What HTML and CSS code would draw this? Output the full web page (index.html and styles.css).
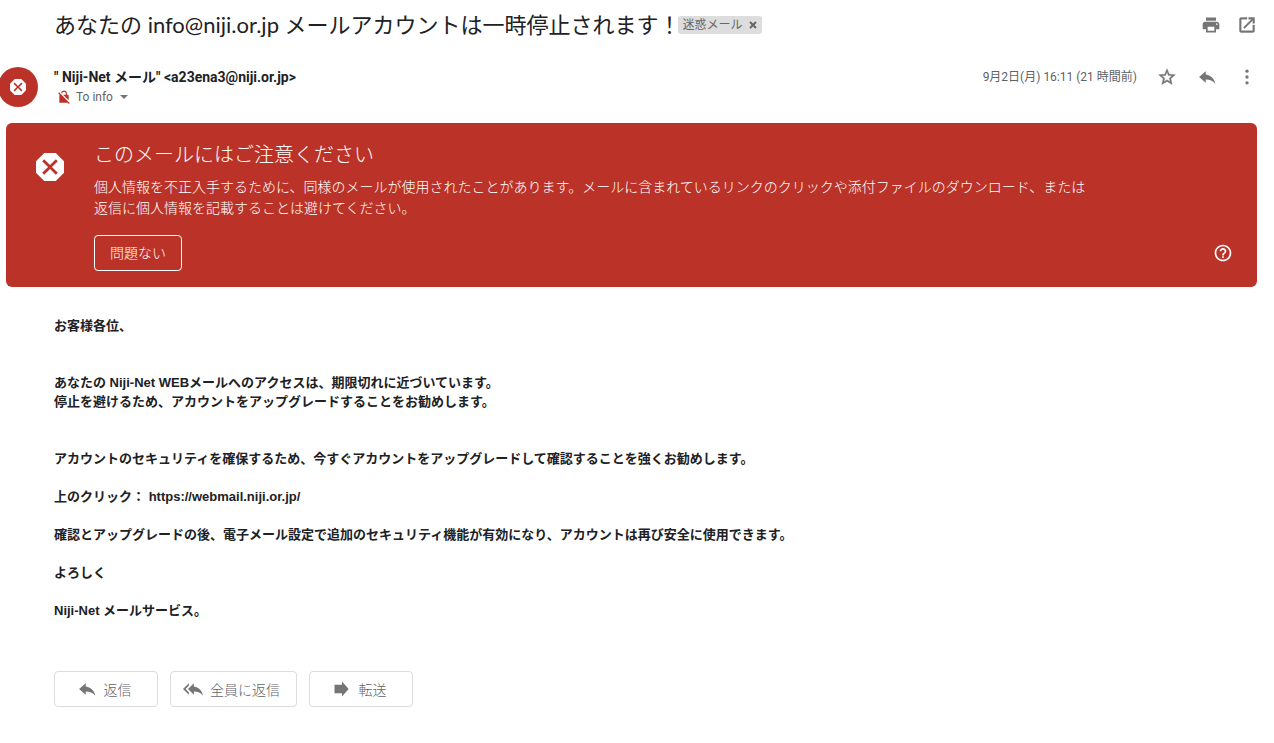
FILE: index.html
```html
<!DOCTYPE html>
<html lang="ja">
<head>
  <meta charset="UTF-8">
  <title>あなたの info@niji.or.jp メールアカウントは一時停止されます！</title>
  <link rel="stylesheet" href="styles.css">
</head>
<body>

  <main class="mail">
    <div class="subject-row">
      <h1>あなたの info@niji.or.jp メールアカウントは一時停止されます！</h1>
      <span class="label">迷惑メール
        <button type="button" class="label-close" aria-label="ラベルを削除">
          <svg viewBox="0 0 8 8" width="8" height="8"><path d="M1 1l6 6M7 1L1 7"/></svg>
        </button>
      </span>
      <div class="subject-actions">
        <button type="button" class="icon-btn" aria-label="印刷">
          <svg viewBox="0 0 24 24"><path d="M19 8H5c-1.66 0-3 1.34-3 3v6h4v4h12v-4h4v-6c0-1.66-1.34-3-3-3zm-3 11H8v-5h8v5zm3-7c-.55 0-1-.45-1-1s.45-1 1-1 1 .45 1 1-.45 1-1 1zm-1-9H6v4h12V3z"/></svg>
        </button>
        <button type="button" class="icon-btn" aria-label="新しいウィンドウで開く">
          <svg viewBox="0 0 24 24"><path d="M19 19H5V5h7V3H5c-1.11 0-2 .9-2 2v14c0 1.1.89 2 2 2h14c1.1 0 2-.9 2-2v-7h-2v7zM14 3v2h3.59l-9.83 9.83 1.41 1.41L19 6.41V10h2V3h-7z" stroke="currentColor" stroke-width=".5"/></svg>
        </button>
      </div>
    </div>

    <header class="sender-row">
      <div class="avatar">
        <svg viewBox="3 3 18 18" width="16" height="16"><path d="M15.73 3H8.27L3 8.27v7.46L8.27 21h7.46L21 15.73V8.27L15.73 3zM17 15.74L15.74 17 12 13.26 8.26 17 7 15.74 10.74 12 7 8.26 8.26 7 12 10.74 15.74 7 17 8.26 13.26 12 17 15.74z"/></svg>
      </div>
      <div class="sender">
        <div class="sender-name">" Niji-Net メール" &lt;a23ena3@niji.or.jp&gt;</div>
        <div class="recipient">
          <svg class="no-lock" viewBox="0 0 24 24" width="14" height="14"><path d="M22 22.5L3.5 4 2 5.5l2.5 2.8C4.2 8.6 4 9.25 4 10v12h14.5l1.8 2zM8.9 6c0-1.71 1.39-3.1 3.1-3.1s3.1 1.39 3.1 3.1v2h-4.66L20 17.56V10c0-1.1-.9-2-2-2h-1V6c0-2.76-2.24-5-5-5-2.32 0-4.26 1.59-4.82 3.74L8.9 6.46V6z"/></svg>
          <span>To info</span>
          <button type="button" class="details-btn" aria-label="詳細を表示">
            <svg viewBox="0 0 8 4" width="8" height="4"><path d="M0 0h8L4 4z"/></svg>
          </button>
        </div>
      </div>
      <div class="sender-actions">
        <time>9月2日(月) 16:11 (21 時間前)</time>
        <button type="button" class="icon-btn" aria-label="スター">
          <svg viewBox="0 0 24 24"><path d="M22 9.24l-7.19-.62L12 2 9.19 8.63 2 9.24l5.46 4.73L5.82 21 12 17.27 18.18 21l-1.63-7.03L22 9.24zM12 15.4l-3.76 2.27 1-4.28-3.32-2.88 4.38-.38L12 6.1l1.71 4.04 4.38.38-3.32 2.88 1 4.28L12 15.4z" stroke="currentColor" stroke-width=".5"/></svg>
        </button>
        <button type="button" class="icon-btn" aria-label="返信">
          <svg viewBox="0 0 24 24"><path d="M10.500 9V5L2.500 12l8 7v-4.100c5 0 8.500 1.600 11.500 5.100-1-5-4.500-10-11.500-11z"/></svg>
        </button>
        <button type="button" class="icon-btn" aria-label="その他">
          <svg viewBox="0 0 24 24"><circle cx="12" cy="5" r="2"/><circle cx="12" cy="12" r="2"/><circle cx="12" cy="19" r="2"/></svg>
        </button>
      </div>
    </header>

    <section class="warning">
      <svg class="warning-icon" viewBox="3 3 18 18" width="28" height="28"><path d="M15.73 3H8.27L3 8.27v7.46L8.27 21h7.46L21 15.73V8.27L15.73 3zM17 15.74L15.74 17 12 13.26 8.26 17 7 15.74 10.74 12 7 8.26 8.26 7 12 10.74 15.74 7 17 8.26 13.26 12 17 15.74z"/></svg>
      <div class="warning-content">
        <h2>このメールにはご注意ください</h2>
        <p>個人情報を不正入手するために、同様のメールが使用されたことがあります。メールに含まれているリンクのクリックや添付ファイルのダウンロード、または返信に個人情報を記載することは避けてください。</p>
        <button type="button" class="safe-btn">問題ない</button>
      </div>
      <button type="button" class="icon-btn help-btn" aria-label="ヘルプ">
        <svg viewBox="0 0 24 24"><path d="M11 18h2v-2h-2v2zm1-16C6.480 2 2 6.480 2 12s4.480 10 10 10 10-4.480 10-10S17.520 2 12 2zm0 18c-4.410 0-8-3.590-8-8s3.590-8 8-8 8 3.590 8 8-3.590 8-8 8zm0-14c-2.210 0-4 1.790-4 4h2c0-1.100.900-2 2-2s2 .900 2 2c0 2-3 1.750-3 5h2c0-2.250 3-2.500 3-5 0-2.210-1.790-4-4-4z"/></svg>
      </button>
    </section>

    <article class="message">
      お客様各位、<br>
      <br>
      <br>
      あなたの Niji-Net WEBメールへのアクセスは、期限切れに近づいています。<br>
      停止を避けるため、アカウントをアップグレードすることをお勧めします。<br>
      <br>
      <br>
      アカウントのセキュリティを確保するため、今すぐアカウントをアップグレードして確認することを強くお勧めします。<br>
      <br>
      上のクリック： <a href="#">https://webmail.niji.or.jp/</a><br>
      <br>
      確認とアップグレードの後、電子メール設定で追加のセキュリティ機能が有効になり、アカウントは再び安全に使用できます。<br>
      <br>
      よろしく<br>
      <br>
      Niji-Net メールサービス。
    </article>

    <div class="replies">
      <button type="button" class="reply-btn">
        <svg viewBox="0 0 24 24"><path d="M10.500 9V5L2.500 12l8 7v-4.100c5 0 8.500 1.600 11.500 5.100-1-5-4.500-10-11.500-11z"/></svg>
        返信
      </button>
      <button type="button" class="reply-btn">
        <svg viewBox="0 0 24 24"><path d="M7 8V5l-7 7 7 7v-3l-4-4 4-4zm6 1V5l-7 7 7 7v-4.100c5 0 8.500 1.600 11 5.100-1-5-4-10-11-11z"/></svg>
        全員に返信
      </button>
      <button type="button" class="reply-btn">
        <svg viewBox="0 0 24 24"><path d="M3 7h9V3l8 9-8 9v-4H3z"/></svg>
        転送
      </button>
    </div>
  </main>

</body>
</html>
```
FILE: styles.css
```css
* {
  box-sizing: border-box;
}

body {
  margin: 0;
  background: #fff;
  color: #202124;
  font-family: Roboto, "Noto Sans CJK JP", sans-serif;
  font-size: 14px;
}

h1, h2, p {
  margin: 0;
  font-weight: 400;
}

button {
  font: inherit;
  cursor: pointer;
}

svg {
  display: block;
  fill: currentColor;
}

.mail {
  padding: 0 17px 36px 6px;
  overflow: hidden;
}

/* Subject */
.subject-row {
  display: flex;
  align-items: center;
  height: 49px;
  padding-left: 48px;
}

h1 {
  font-family: Lato, "Noto Sans CJK JP", sans-serif;
  font-size: 22px;
  line-height: 28px;
}

.label {
  display: flex;
  align-items: center;
  gap: 6px;
  height: 18px;
  margin-left: -3px;
  padding: 0 5px;
  border-radius: 3px;
  background: #ddd;
  color: #666;
  font-size: 12px;
  line-height: 16px;
  white-space: nowrap;
}

.label-close {
  padding: 0;
  border: none;
  background: none;
  color: #666;
}

.label-close svg {
  fill: none;
  stroke: currentColor;
  stroke-width: 2;
}

.subject-actions {
  display: flex;
  gap: 16px;
  margin-left: auto;
}

.icon-btn {
  width: 20px;
  height: 20px;
  padding: 0;
  border: none;
  background: none;
  color: #757575;
}

/* Sender */
.sender-row {
  display: flex;
  margin-top: 18px;
}

.avatar {
  display: flex;
  align-items: center;
  justify-content: center;
  width: 40px;
  height: 40px;
  margin-left: -8px;
  margin-right: 16px;
  border-radius: 50%;
  background: #bb3328;
  color: #fff;
}

.sender-name {
  font-weight: 700;
  line-height: 20px;
}

.recipient {
  display: flex;
  align-items: center;
  gap: 5px;
  height: 20px;
  padding-left: 3px;
  color: #5f6368;
  font-size: 12px;
}

.no-lock {
  color: #bb3328;
}

.details-btn {
  padding: 0 2px;
  border: none;
  background: none;
  color: #757575;
}

.sender-actions {
  display: flex;
  gap: 20px;
  height: 20px;
  margin-left: auto;
  color: #5f6368;
  font-size: 12px;
  line-height: 20px;
}

/* Warning banner */
.warning {
  display: flex;
  margin-top: 16px;
  padding: 18px 24px 16px 30px;
  border-radius: 6px;
  background: #bb3328;
  color: #fff;
}

.warning-icon {
  flex-shrink: 0;
  margin-top: 12px;
  margin-right: 30px;
}

h2 {
  font-size: 20px;
  font-weight: 300;
  line-height: 28px;
}

.warning p {
  max-width: 1000px;
  margin: 8px 0 16px;
  font-weight: 300;
  line-height: 21px;
}

.safe-btn {
  display: block;
  height: 36px;
  padding: 0 15px 2px;
  border: 1px solid #fff;
  border-radius: 4px;
  background: none;
  color: #fff;
  font-weight: 300;
}

.help-btn {
  align-self: flex-end;
  margin-left: auto;
  margin-bottom: 8px;
  color: #fff;
}

/* Message */
.message {
  margin-top: 29px;
  padding-left: 48px;
  font-family: "Liberation Sans", "Noto Sans CJK JP", sans-serif;
  font-size: 13px;
  font-weight: 700;
  line-height: 19px;
}

.message a {
  color: inherit;
  text-decoration: none;
}

/* Reply buttons */
.replies {
  display: flex;
  gap: 12px;
  margin-top: 51px;
  padding-left: 48px;
}

.reply-btn {
  display: flex;
  align-items: center;
  justify-content: center;
  gap: 7px;
  min-width: 104px;
  height: 36px;
  padding: 0 16px 1px 12px;
  border: 1px solid #dadce0;
  border-radius: 4px;
  background: #fff;
  color: #5f6368;
  font-weight: 300;
}

.reply-btn svg {
  width: 20px;
  height: 20px;
  color: #757575;
}
```
